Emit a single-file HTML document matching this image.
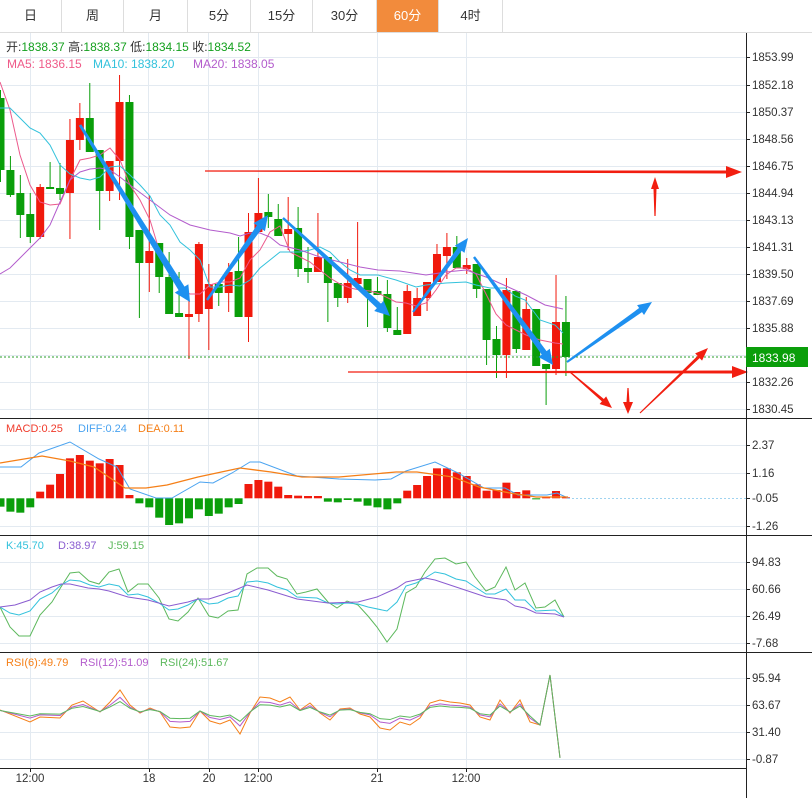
<!DOCTYPE html>
<html><head><meta charset="utf-8"><style>
body{margin:0;width:812px;height:798px;overflow:hidden;background:#fff;font-family:"Liberation Sans","Noto Sans CJK SC",sans-serif;}
.tabs{position:absolute;left:0;top:0;width:812px;height:33px;border-bottom:1px solid #ddd;box-sizing:border-box;}
.tab{position:absolute;top:0;height:32px;line-height:32px;text-align:center;font-size:13px;color:#333;border-right:1px solid #ddd;box-sizing:border-box;}
.tab.on{background:#f28b3c;color:#fff;}
svg{position:absolute;left:0;top:0;}
</style></head><body>
<div class="tabs">
<div class="tab" style="left:0;width:62px">日</div>
<div class="tab" style="left:62px;width:62px">周</div>
<div class="tab" style="left:124px;width:64px">月</div>
<div class="tab" style="left:188px;width:63px">5分</div>
<div class="tab" style="left:251px;width:62px">15分</div>
<div class="tab" style="left:313px;width:64px">30分</div>
<div class="tab on" style="left:377px;width:62px">60分</div>
<div class="tab" style="left:439px;width:64px">4时</div>
</div>
<svg id="s" width="812" height="798" xmlns="http://www.w3.org/2000/svg" font-family="Liberation Sans, Noto Sans CJK SC, sans-serif">
<g id="grid" stroke="#e3eaf1" stroke-width="1"></g>
<g id="cd"></g>
<g fill="none" stroke-width="1">
<polyline id="ma5" stroke="#ec5a8c"/>
<polyline id="ma10" stroke="#33c2dc"/>
<polyline id="ma20" stroke="#b35ccc"/>
</g>
<line x1="0" y1="357" x2="746" y2="357" stroke="#2a9d2a" stroke-dasharray="2,2"/>
<g id="macd"></g>
<g id="ln" fill="none" stroke-width="1"></g>
<g id="arr"></g>
<g stroke="#222" stroke-width="1">
<line x1="746.5" y1="33" x2="746.5" y2="798"/>
<line x1="0" y1="418.5" x2="812" y2="418.5"/>
<line x1="0" y1="535.5" x2="812" y2="535.5"/>
<line x1="0" y1="652.5" x2="812" y2="652.5"/>
<line x1="0" y1="768.5" x2="746" y2="768.5"/>
</g>
<g id="ax" font-size="11.5" fill="#333"></g>
<rect x="746" y="347" width="62" height="20" fill="#0a9e0a"/>
<text x="752" y="362" font-size="12" fill="#fff">1833.98</text>
<g font-size="12">
<text x="6" y="51" fill="#333">开:<tspan fill="#14a01e">1838.37</tspan>  高:<tspan fill="#14a01e">1838.37</tspan>  低:<tspan fill="#14a01e">1834.15</tspan>  收:<tspan fill="#14a01e">1834.52</tspan></text>
<text x="7" y="68" fill="#ef5a88">MA5: 1836.15</text>
<text x="93" y="68" fill="#33c2dc">MA10: 1838.20</text>
<text x="193" y="68" fill="#b35ccc">MA20: 1838.05</text>
</g>
<g font-size="11">
<text x="6" y="432" fill="#f03a2a">MACD:0.25</text>
<text x="78" y="432" fill="#4aa3f0">DIFF:0.24</text>
<text x="138" y="432" fill="#f57f17">DEA:0.11</text>
<text x="6" y="549" fill="#33c2dc">K:45.70</text>
<text x="58" y="549" fill="#8a5cd0">D:38.97</text>
<text x="108" y="549" fill="#5cb85c">J:59.15</text>
<text x="6" y="666" fill="#f57f17">RSI(6):49.79</text>
<text x="80" y="666" fill="#b35ccc">RSI(12):51.09</text>
<text x="160" y="666" fill="#5cb85c">RSI(24):51.67</text>
</g>
</svg>
<script>
var N="http://www.w3.org/2000/svg",s=document.getElementById('s');
function el(p,t,a,txt){var e=document.createElementNS(N,t);for(var k in a)e.setAttribute(k,a[k]);if(txt)e.textContent=txt;document.getElementById(p).appendChild(e);return e;}
var R="#f0190c",G="#0a9e0a";
var hy=[57,85,112,139,166,193,220,247,274,301,328,355,382,409,445,473,526,562,589,616,643,678,705,732,759];
hy.forEach(function(y){el('grid','line',{x1:0,x2:746,y1:y+.5,y2:y+.5});});
[30,148,208,258,377,466].forEach(function(x){el('grid','line',{x1:x+.5,x2:x+.5,y1:33,y2:768});});
var al=[[57,'1853.99'],[85,'1852.18'],[112,'1850.37'],[139,'1848.56'],[166,'1846.75'],[193,'1844.94'],[220,'1843.13'],[247,'1841.31'],[274,'1839.50'],[301,'1837.69'],[328,'1835.88'],[382,'1832.26'],[409,'1830.45'],[445,'2.37'],[473,'1.16'],[498,'-0.05'],[526,'-1.26'],[562,'94.83'],[589,'60.66'],[616,'26.49'],[643,'-7.68'],[678,'95.94'],[705,'63.67'],[732,'31.40'],[759,'-0.87']];
al.forEach(function(a){el('ax','line',{x1:746,x2:750,y1:a[0]+.5,y2:a[0]+.5,stroke:'#222'});el('ax','text',{x:752,y:a[0]+4},a[1]);});
[[30,'12:00'],[149,'18'],[209,'20'],[258,'12:00'],[377,'21'],[466,'12:00']].forEach(function(a){el('ax','line',{x1:a[0]+.5,x2:a[0]+.5,y1:768,y2:772,stroke:'#222'});el('ax','text',{x:a[0],y:782,'text-anchor':'middle'},a[1]);});
var C=[[0,98,170,90,182],[0,170,195,156,197],[0,193,215,175,238],[0,214,237,193,243],[1,187,237,184,239],[0,187,189,162,189],[0,188,194,163,200],[1,140,193,119,239],[1,118,140,103,150],[0,118,152,83,152],[0,150,191,150,230],[1,161,191,161,201],[1,102,161,75,200],[0,102,237,95,249],[0,230,263,230,318],[1,251,263,195,292],[0,243,277,243,293],[0,277,314,252,314],[0,313,317,272,317],[1,314,317,300,359],[1,244,314,242,322],[1,284,309,264,350],[0,284,293,284,306],[1,272,293,263,312],[0,271,317,237,317],[1,232,317,213,342],[1,213,232,178,232],[0,212,217,194,228],[0,219,236,204,236],[1,229,234,197,250],[0,228,269,207,277],[0,268,272,247,283],[1,257,272,213,272],[0,257,283,257,322],[0,283,298,283,307],[1,283,298,259,303],[1,278,284,222,284],[0,279,293,279,327],[0,291,295,277,295],[0,294,328,280,332],[0,330,335,307,335],[1,291,334,285,334],[1,298,316,288,316],[1,282,298,282,311],[1,254,282,244,282],[1,247,256,233,279],[0,247,268,236,268],[1,265,269,258,274],[0,264,289,264,298],[0,289,340,289,365],[0,339,355,326,378],[1,290,355,278,378],[0,291,349,291,353],[1,309,350,297,350],[0,309,366,309,366],[0,364,369,364,405],[1,322,369,275,375],[0,322,357,296,376]];
function cx(i){return 0.5+i*9.92;}
C.forEach(function(c,i){var x=cx(i),col=c[0]?R:G;el('cd','line',{x1:x,x2:x,y1:c[3],y2:c[4],stroke:col,'stroke-width':1});el('cd','rect',{x:x-4,y:c[1],width:8,height:Math.max(1.5,c[2]-c[1]),fill:col});});
function P(a){var o=[];for(var i=0;i<a.length;i+=2)o.push(a[i]+','+a[i+1]);return o.join(' ');}
document.getElementById('ma10').setAttribute('points',P([0,108,10,108,30,128,40,133,50,145,60,165,70,174,80,178,90,180,100,177,110,167,120,166,130,175,140,185,150,196,160,215,170,225,180,242,190,250,200,260,210,287,220,287,230,285,240,286,250,280,260,268,270,260,280,252,300,252,310,250,320,247,330,252,340,262,350,270,360,275,378,275,396,280,416,287,426,285,446,283,466,282,476,285,490,288,505,288,515,296,525,300,540,320,555,325,563,333]));
document.getElementById('ma5').setAttribute('points',P([0,82,10,110,20,155,30,185,40,202,50,205,60,204,70,180,80,160,90,158,100,155,110,148,120,160,130,185,140,200,150,220,160,253,170,275,180,290,190,294,200,294,210,285,220,282,230,282,240,278,250,260,260,250,270,232,280,226,290,252,300,257,310,262,320,270,330,278,340,284,350,288,360,290,370,291,380,294,396,302,406,303,416,306,426,303,436,290,446,275,456,268,466,268,476,274,486,294,496,314,506,325,516,330,526,335,540,340,555,343,563,344]));
document.getElementById('ma20').setAttribute('points',P([0,274,10,268,20,258,30,248,40,238,50,225,60,202,70,180,80,172,90,169,100,168,110,170,120,177,130,185,150,200,170,215,190,225,210,230,230,233,240,236,250,233,260,233,270,237,280,245,300,250,320,257,340,262,360,267,378,270,400,271,426,275,446,272,466,270,486,277,506,286,526,295,545,305,563,309]));
var M=[290,305,308,292,245,224,192,145,135,152,160,147,165,255,280,292,323,345,340,325,298,318,311,292,282,222,210,215,230,255,257,258,258,275,277,270,275,287,292,298,280,242,225,198,175,175,187,198,223,242,240,218,246,241,268,262,243,262];
var z=498.3;
M.forEach(function(v,i){var y=410+v/3,x=cx(i);var up=y<z;el('macd','rect',{x:x-4,y:up?y:z,width:8,height:Math.max(1,Math.abs(y-z)),fill:up?R:G});});
el('macd','line',{x1:568,x2:746,y1:498.5,y2:498.5,stroke:'#9fd3f0','stroke-dasharray':'2,2'});
function L(c,a,w){el('ln','polyline',{points:P(a),stroke:c,'stroke-width':w||1});}
L('#4aa3f0',[0,467,21,467,39,453,70,442,99,459,117,467,130,489,156,498,172,498,200,482,213,483,232,473,250,462,260,462,297,476,339,479,375,480,391,479,406,471,435,462,458,473,484,488,505,488,518,495,547,495,557,493,568,498]);
L('#f57f17',[0,463,42,456,70,461,94,467,125,488,146,488,167,485,198,477,240,468,271,472,302,477,339,477,396,472,417,472,453,477,479,487,510,493,536,497,568,497],1.3);
L('#5cb85c',[0,607,10,627,19,636,30,636,40,615,52,602,61,587,70,573,79,572,89,581,99,584,109,572,119,569,128,592,138,584,148,584,159,598,169,619,178,621,188,612,198,598,209,616,218,618,228,611,238,610,247,574,257,568,268,568,277,576,287,579,297,594,306,592,317,589,328,602,337,608,347,601,358,605,368,616,377,627,387,642,397,629,406,593,416,587,425,572,435,559,445,558,456,564,466,562,475,577,486,591,495,587,506,567,515,590,525,583,536,608,545,607,555,600,564,617]);
L('#33c2dc',[0,607,10,613,19,615,30,611,40,599,52,593,61,585,70,580,80,581,90,585,99,587,109,584,119,586,128,595,138,594,148,597,159,603,169,610,178,609,188,605,198,599,209,604,218,603,228,598,238,596,247,582,257,581,268,583,277,587,287,590,297,597,317,598,328,603,337,604,347,603,358,604,368,607,387,611,397,602,406,586,416,583,425,578,435,572,445,574,456,579,466,581,475,587,486,594,495,594,506,589,515,600,525,600,536,611,555,610,564,617]);
L('#8a5cd0',[0,607,15,605,30,600,40,592,52,587,61,584,70,584,88,588,99,589,109,591,128,597,148,600,169,606,188,602,198,599,209,599,228,593,247,585,268,590,297,599,328,603,358,602,377,597,397,588,406,582,425,578,435,580,456,587,486,597,506,600,515,606,525,608,536,613,555,614,564,617]);
var r6=[0,710,30,722,40,717,60,718,72,705,83,701,100,712,110,702,120,690,130,705,140,713,150,708,160,712,170,727,180,728,190,727,200,711,210,721,220,724,230,720,240,734,250,713,260,697,270,698,280,702,290,697,300,710,310,703,320,713,330,720,340,709,350,708,360,714,370,717,380,728,390,730,400,722,410,725,420,718,430,703,440,700,450,702,460,703,470,705,480,717,490,720,500,700,510,713,520,700,530,722,540,725,550,675,560,758];
function damp(a,f){var o=[];for(var i=0;i<a.length;i+=2){o.push(a[i]);var x=a[i];o.push(x>=540?a[i+1]:711+(a[i+1]-711)*f);}return o;}
L('#f57f17',r6);L('#b35ccc',damp(r6,0.65));L('#5cb85c',damp(r6,0.45));
function arrow(x1,y1,x2,y2,col,w,hw,hl){var dx=x2-x1,dy=y2-y1,l=Math.sqrt(dx*dx+dy*dy),ux=dx/l,uy=dy/l,px=-uy,py=ux;var bx=x2-ux*hl,by=y2-uy*hl;
var pts=[x1+px*w*0.2,y1+py*w*0.2,bx+px*w/2,by+py*w/2,bx+px*hw,by+py*hw,x2,y2,bx-px*hw,by-py*hw,bx-px*w/2,by-py*w/2,x1-px*w*0.2,y1-py*w*0.2];el('arr','polygon',{points:P(pts),fill:col});}
var B="#1e90f0";
arrow(80,125,190,302,B,7,8,16);arrow(207,300,268,215,B,6,7,15);arrow(283,218,390,316,B,6,7,15);arrow(413,312,468,238,B,5,6,14);arrow(474,257,553,365,B,6,7,15);arrow(567,362,652,302,B,5,6,14);
var Rd="#f21e10";
arrow(205,171,742,172,Rd,3,6,16);arrow(348,372,748,372,Rd,3,6,16);
arrow(655,216,655,177,Rd,3,4,12);arrow(570,372,612,408,Rd,3,5,12);arrow(628,388,628,414,Rd,3,5,12);arrow(640,413,708,348,Rd,3,5,13);
</script>
</body></html>
